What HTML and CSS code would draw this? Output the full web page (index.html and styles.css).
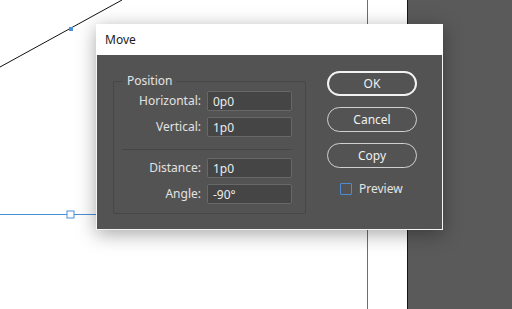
FILE: index.html
```html
<!doctype html>
<html lang="en">
<head>
  <meta charset="UTF-8">
  <title>Move</title>
  <link rel="stylesheet" href="styles.css">
</head>
<body>
<div id="workspace">
  <div class="page"></div>
  <div class="pasteboard"></div>
  <!-- artwork on the page -->
  <svg class="artwork" width="512" height="309" viewBox="0 0 512 309">
    <line x1="367.5" y1="0" x2="367.5" y2="309" stroke="#a040d8" stroke-width="1"/>
    <line x1="0" y1="67" x2="122" y2="0" stroke="#111" stroke-width="1"/>
    <rect x="69" y="27" width="4" height="4" fill="#4a90d9"/>
    <line x1="0" y1="214.5" x2="200" y2="214.5" stroke="#4a8fd8" stroke-width="1"/>
    <rect x="67" y="211" width="7" height="7" fill="#fff" stroke="#4a8fd8" stroke-width="1"/>
  </svg>

  <div class="dialog">
    <div class="dialog-title">Move</div>
    <div class="dialog-body">
      <fieldset class="group">
        <legend>Position</legend>
        <div class="fields">
          <label for="f-h">Horizontal:</label>
          <input id="f-h" type="text" value="0p0">
          <label for="f-v">Vertical:</label>
          <input id="f-v" type="text" value="1p0">
          <div class="separator"></div>
          <label for="f-d">Distance:</label>
          <input id="f-d" type="text" value="1p0">
          <label for="f-a">Angle:</label>
          <input id="f-a" type="text" value="-90°">
        </div>
      </fieldset>
      <div class="actions">
        <button class="btn btn-default">OK</button>
        <button class="btn">Cancel</button>
        <button class="btn">Copy</button>
        <label class="preview"><span class="check"></span>Preview</label>
      </div>
    </div>
  </div>
</div>
</body>
</html>
```

FILE: styles.css
```css
* {
  margin: 0;
  padding: 0;
  box-sizing: border-box;
}
html, body {
  width: 512px;
  height: 309px;
  overflow: hidden;
}
body {
  font-family: "Noto Sans", "Open Sans", sans-serif;
  font-size: 12px;
}
#workspace {
  position: relative;
  display: flex;
  width: 512px;
  height: 309px;
}
.page {
  width: 408px;
  background: #fff;
  border-right: 1px solid #14161e;
}
.pasteboard {
  flex: 1;
  background: #5a5a5a;
}
.artwork {
  position: absolute;
  left: 0;
  top: 0;
}

.dialog {
  position: absolute;
  left: 96px;
  top: 24px;
  width: 347px;
  height: 206px;
  display: flex;
  flex-direction: column;
  background: #f4f4f4;
  box-shadow: 0 4px 18px rgba(0, 0, 0, 0.35);
}
.dialog-title {
  height: 31px;
  line-height: 31px;
  padding-left: 9px;
  background: #fff;
  color: #1b1b1b;
}
.dialog-body {
  flex: 1;
  display: flex;
  gap: 21px;
  margin: 0 1px 1px;
  padding: 16px 0 0 16px;
  background: #535353;
  color: #e2e2e2;
}

.group {
  width: 193px;
  height: 141px;
  margin-top: 2px;
  border: 1px solid #474747;
  border-radius: 2px;
}
.group legend {
  margin-left: 9px;
  padding: 0 4px;
  line-height: 16px;
  color: #e4e4e4;
}
.fields {
  display: grid;
  grid-template-columns: 1fr 85px;
  column-gap: 6px;
  row-gap: 6px;
  padding: 2px 13px 9px 8px;
}
.fields label {
  text-align: right;
  line-height: 20px;
}
.fields input {
  height: 20px;
  padding: 0 5px;
  background: #454545;
  border: 1px solid #686868;
  border-radius: 2px;
  color: #ececec;
  font: inherit;
  outline: none;
}
.separator {
  grid-column: 1 / 3;
  height: 1px;
  margin: 6px 0 2px;
  background: #464646;
}

.actions {
  display: flex;
  flex-direction: column;
  gap: 11px;
}
.btn {
  width: 90px;
  height: 25px;
  border: 1px solid #d0d0d0;
  border-radius: 13px;
  background: transparent;
  color: #f0f0f0;
  font: inherit;
}
.btn-default {
  border: 2px solid #f2f2f2;
}
.preview {
  display: flex;
  align-items: center;
  gap: 7px;
  margin: 1px 0 0 13px;
  color: #e4e4e4;
}
.check {
  width: 12px;
  height: 12px;
  border: 1px solid #4e8bd4;
  border-radius: 1px;
}
```
